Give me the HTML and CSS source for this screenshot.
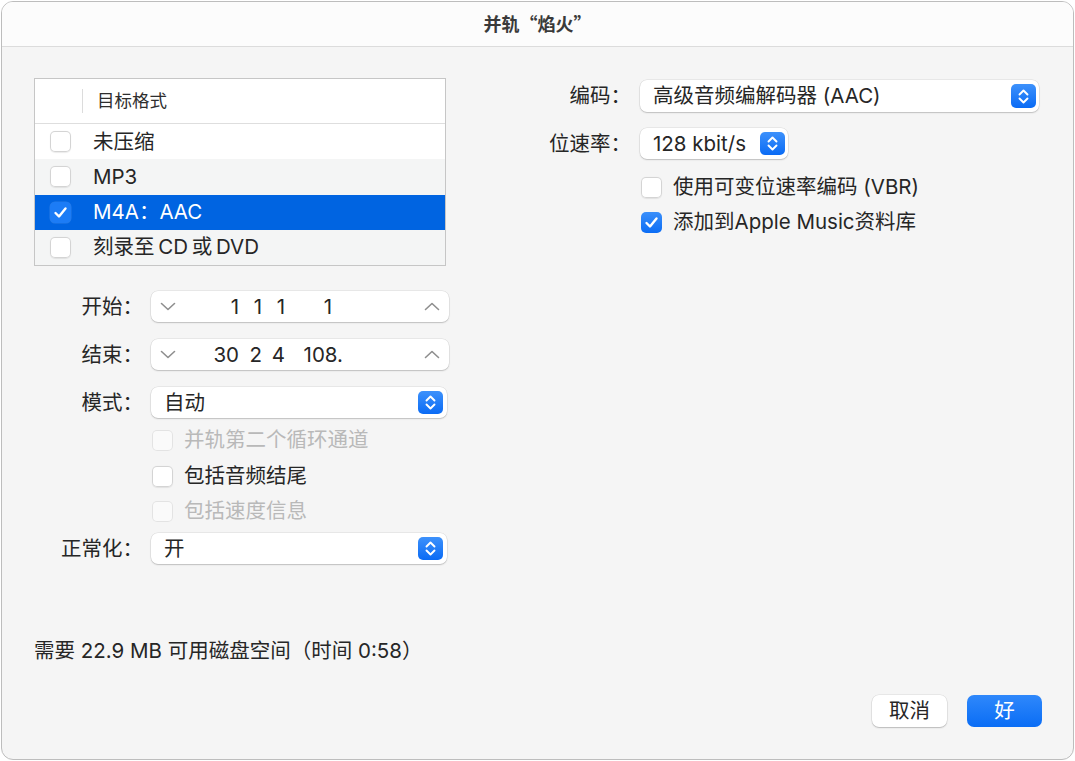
FILE: index.html
```html
<!DOCTYPE html>
<html lang="zh-CN">
<head>
<meta charset="utf-8">
<title>并轨</title>
<link rel="stylesheet" href="styles.css">
</head>
<body>
<div class="window">
  <div class="titlebar">并轨“焰火”</div>
  <div class="content">
    <div class="columns">
      <div class="left">
        <div class="table">
          <div class="thead"><span class="hsep"></span><span class="htext">目标格式</span></div>
          <div class="row"><span class="cb"></span><span>未压缩</span></div>
          <div class="row alt"><span class="cb"></span><span>MP3</span></div>
          <div class="row sel"><span class="cb on tablecb"><svg viewBox="0 0 21 21" width="21" height="21"><path d="M5.5 11 L9 14.5 L15.5 6.5" fill="none" stroke="#fff" stroke-width="2.4" stroke-linecap="round" stroke-linejoin="round"/></svg></span><span>M4A：AAC</span></div>
          <div class="row alt"><span class="cb"></span><span>刻录至&#8201;CD&#8201;或&#8201;DVD</span></div>
        </div>

        <div class="frow r-start">
          <span class="label">开始：</span>
          <div class="stepper">
            <svg class="chev-d" viewBox="0 0 16 9" width="16" height="9"><path d="M1.5 1.5 L8 7.5 L14.5 1.5" fill="none" stroke="#8e8e8e" stroke-width="1.6" stroke-linecap="round" stroke-linejoin="round"/></svg>
            <div class="segs"><span class="s1">1</span><span class="s2">1</span><span class="s3">1</span><span class="s4 pr">1</span></div>
            <svg class="chev-u" viewBox="0 0 16 9" width="16" height="9"><path d="M1.5 7.5 L8 1.5 L14.5 7.5" fill="none" stroke="#8e8e8e" stroke-width="1.6" stroke-linecap="round" stroke-linejoin="round"/></svg>
          </div>
        </div>
        <div class="frow r-end">
          <span class="label">结束：</span>
          <div class="stepper">
            <svg class="chev-d" viewBox="0 0 16 9" width="16" height="9"><path d="M1.5 1.5 L8 7.5 L14.5 1.5" fill="none" stroke="#8e8e8e" stroke-width="1.6" stroke-linecap="round" stroke-linejoin="round"/></svg>
            <div class="segs"><span class="s1">30</span><span class="s2">2</span><span class="s3">4</span><span class="s4">108.</span></div>
            <svg class="chev-u" viewBox="0 0 16 9" width="16" height="9"><path d="M1.5 7.5 L8 1.5 L14.5 7.5" fill="none" stroke="#8e8e8e" stroke-width="1.6" stroke-linecap="round" stroke-linejoin="round"/></svg>
          </div>
        </div>
        <div class="frow r-mode">
          <span class="label">模式：</span>
          <div class="popup wide-l">
            <span class="ptext">自动</span>
            <span class="pbtn"><svg viewBox="0 0 25 23" width="25" height="23"><path d="M8.5 9.5 L12.5 5.5 L16.5 9.5 M8.5 13.5 L12.5 17.5 L16.5 13.5" fill="none" stroke="#fff" stroke-width="1.9" stroke-linecap="round" stroke-linejoin="round"/></svg></span>
          </div>
        </div>
        <div class="frow crow c1">
          <span class="label"></span>
          <span class="cb dis"></span><span class="ctext dis">并轨第二个循环通道</span>
        </div>
        <div class="frow crow c2">
          <span class="label"></span>
          <span class="cb"></span><span class="ctext">包括音频结尾</span>
        </div>
        <div class="frow crow c3">
          <span class="label"></span>
          <span class="cb dis"></span><span class="ctext dis">包括速度信息</span>
        </div>
        <div class="frow r-norm">
          <span class="label">正常化：</span>
          <div class="popup wide-l">
            <span class="ptext">开</span>
            <span class="pbtn"><svg viewBox="0 0 25 23" width="25" height="23"><path d="M8.5 9.5 L12.5 5.5 L16.5 9.5 M8.5 13.5 L12.5 17.5 L16.5 13.5" fill="none" stroke="#fff" stroke-width="1.9" stroke-linecap="round" stroke-linejoin="round"/></svg></span>
          </div>
        </div>
      </div>

      <div class="right">
        <div class="frow rr-codec">
          <span class="rlabel">编码：</span>
          <div class="popup codec">
            <span class="ptext">高级音频编解码器 (AAC)</span>
            <span class="pbtn"><svg viewBox="0 0 25 23" width="25" height="23"><path d="M8.5 9.5 L12.5 5.5 L16.5 9.5 M8.5 13.5 L12.5 17.5 L16.5 13.5" fill="none" stroke="#fff" stroke-width="1.9" stroke-linecap="round" stroke-linejoin="round"/></svg></span>
          </div>
        </div>
        <div class="frow rr-rate">
          <span class="rlabel">位速率：</span>
          <div class="popup rate">
            <span class="ptext">128 kbit/s</span>
            <span class="pbtn"><svg viewBox="0 0 25 23" width="25" height="23"><path d="M8.5 9.5 L12.5 5.5 L16.5 9.5 M8.5 13.5 L12.5 17.5 L16.5 13.5" fill="none" stroke="#fff" stroke-width="1.9" stroke-linecap="round" stroke-linejoin="round"/></svg></span>
          </div>
        </div>
        <div class="frow crow rc1">
          <span class="rlabel"></span>
          <span class="cb"></span><span class="ctext">使用可变位速率编码 (VBR)</span>
        </div>
        <div class="frow crow rc2">
          <span class="rlabel"></span>
          <span class="cb on"><svg viewBox="0 0 21 21" width="21" height="21"><path d="M5.5 11 L9 14.5 L15.5 6.5" fill="none" stroke="#fff" stroke-width="2.4" stroke-linecap="round" stroke-linejoin="round"/></svg></span><span class="ctext">添加到Apple Music资料库</span>
        </div>
      </div>
    </div>

    <div class="footer">需要 22.9 MB 可用磁盘空间（时间 0:58）</div>

    <div class="buttons">
      <button class="btn cancel">取消</button>
      <button class="btn ok">好</button>
    </div>
  </div>
</div>
</body>
</html>
```

FILE: styles.css
```css
* { box-sizing: border-box; margin: 0; padding: 0; }
html, body { background: #ffffff; }
body {
  margin: 0;
  font-family: "Inter", "Noto Sans CJK SC", sans-serif;
  font-size: 20.5px;
  color: #262626;
}

.window {
  margin: 1px;
  width: 1073px;
  height: 759px;
  border: 1px solid #bdbdbd;
  border-radius: 12px;
  background: #f5f5f5;
  overflow: hidden;
  display: flex;
  flex-direction: column;
}

.titlebar {
  height: 45px;
  flex: none;
  background: #fcfcfc;
  border-bottom: 1px solid #dcdcdc;
  text-align: center;
  line-height: 42px;
  font-family: "Noto Sans CJK SC", sans-serif;
  font-size: 18px;
  font-weight: 700;
  color: #3a3a3a;
}

.content {
  flex: 1;
  padding: 31px 31px 0 32px;
  display: flex;
  flex-direction: column;
}

.columns { display: flex; align-items: flex-start; }
.left { width: 415px; flex: none; }
.right { width: 499px; flex: none; margin-left: 91px; }

/* table */
.table {
  width: 412px;
  border: 1px solid #c6c6c6;
  background: #ffffff;
}
.thead {
  height: 45px;
  border-bottom: 1px solid #dedede;
  display: flex;
  align-items: center;
}
.hsep {
  width: 1px;
  height: 24px;
  background: #dcdcdc;
  margin-left: 47px;
}
.htext {
  margin-left: 14px;
  font-size: 17.5px;
  color: #2e2e2e;
  line-height: 24px;
}
.row {
  height: 35.25px;
  display: flex;
  align-items: center;
  padding-left: 15px;
  line-height: 24px;
}
.row .cb { margin-right: 22px; }
.row.alt { background: #f4f5f5; }
.row.sel { background: #0064e1; color: #ffffff; }

/* checkbox */
.cb {
  width: 21px;
  height: 21px;
  flex: none;
  border-radius: 5px;
  background: #ffffff;
  box-shadow: inset 0 0 0 1px #d4d4d4, 0 0.5px 1px rgba(0,0,0,0.08);
  display: flex;
  align-items: center;
  justify-content: center;
}
.cb.dis {
  background: #fafafa;
  box-shadow: inset 0 0 0 1px #e3e3e3;
}
.cb.on {
  background: linear-gradient(#3a8ffa, #0c6df5);
  box-shadow: none;
}
.cb.tablecb {
  background: #1c7cf6;
  box-shadow: 0 0 0 0.5px rgba(255,255,255,0.15);
}
.cb svg { display: block; }

/* form rows */
.frow { display: flex; align-items: center; }
.label {
  width: 109px;
  flex: none;
  margin-right: 8px;
  text-align: right;
  line-height: 24px;
  white-space: nowrap;
}
.rlabel {
  width: 91px;
  flex: none;
  margin-right: 9px;
  text-align: right;
  line-height: 24px;
  white-space: nowrap;
}
.r-start { margin-top: 25px; }
.r-end { margin-top: 17px; }
.r-mode { margin-top: 17px; }
.c1 { margin-top: 11px; }
.c2 { margin-top: 14px; }
.c3 { margin-top: 13px; }
.r-norm { margin-top: 11px; }

.crow { height: 22px; }
.crow .cb { margin-left: 1px; }
.ctext {
  margin-left: 11px;
  line-height: 22px;
  white-space: nowrap;
}
.ctext.dis { color: #b9b9b9; }

/* stepper */
.stepper {
  width: 298px;
  height: 31px;
  background: #ffffff;
  border-radius: 7px;
  box-shadow: 0 0 0 0.5px rgba(0,0,0,0.1), 0 1px 1.5px rgba(0,0,0,0.18);
  display: flex;
  align-items: center;
  padding: 0 9px;
}
.stepper svg { display: block; flex: none; }
.chev-u { margin-left: auto; }
.segs {
  display: flex;
  margin-left: 14px;
  line-height: 24px;
  white-space: nowrap;
}
.segs span { text-align: right; display: block; }
.s1 { width: 49px; }
.s2 { width: 23px; }
.s3 { width: 23px; }
.s4 { width: 58px; }
.s4.pr { padding-right: 11px; }

/* popup */
.popup {
  height: 31px;
  background: #ffffff;
  border-radius: 7px;
  box-shadow: 0 0 0 0.5px rgba(0,0,0,0.1), 0 1px 1.5px rgba(0,0,0,0.18);
  display: flex;
  align-items: center;
  padding-left: 13px;
  padding-right: 4px;
}
.popup.wide-l { width: 296px; }
.popup.codec { width: 399px; height: 32px; padding-right: 3px; }
.popup.rate { width: 148px; padding-right: 3px; }
.ptext { line-height: 24px; white-space: nowrap; }
.pbtn {
  margin-left: auto;
  width: 25px;
  height: 23px;
  border-radius: 5px;
  background: linear-gradient(#3d91fb, #0a6bf5);
  display: flex;
  align-items: center;
  justify-content: center;
  flex: none;
}
.popup.codec .pbtn { height: 24px; }
.pbtn svg { display: block; }

.rr-codec { margin-top: 2px; }
.rr-rate { margin-top: 16px; }
.rc1 { margin-top: 17px; }
.rc2 { margin-top: 13px; }

/* footer */
.footer {
  margin-top: 75px;
  line-height: 24px;
  white-space: nowrap;
}

.buttons {
  margin-top: 32px;
  display: flex;
  justify-content: flex-end;
  gap: 20px;
}
.btn {
  width: 75px;
  height: 32px;
  border: none;
  border-radius: 7px;
  font-family: "Inter", "Noto Sans CJK SC", sans-serif;
  font-size: 20.5px;
  line-height: 24px;
  cursor: default;
}
.btn.cancel {
  background: #ffffff;
  color: #262626;
  box-shadow: 0 0 0 0.5px rgba(0,0,0,0.1), 0 1px 1.5px rgba(0,0,0,0.2);
}
.btn.ok {
  background: linear-gradient(#2f88fb, #0a6df5);
  color: #ffffff;
}
```
